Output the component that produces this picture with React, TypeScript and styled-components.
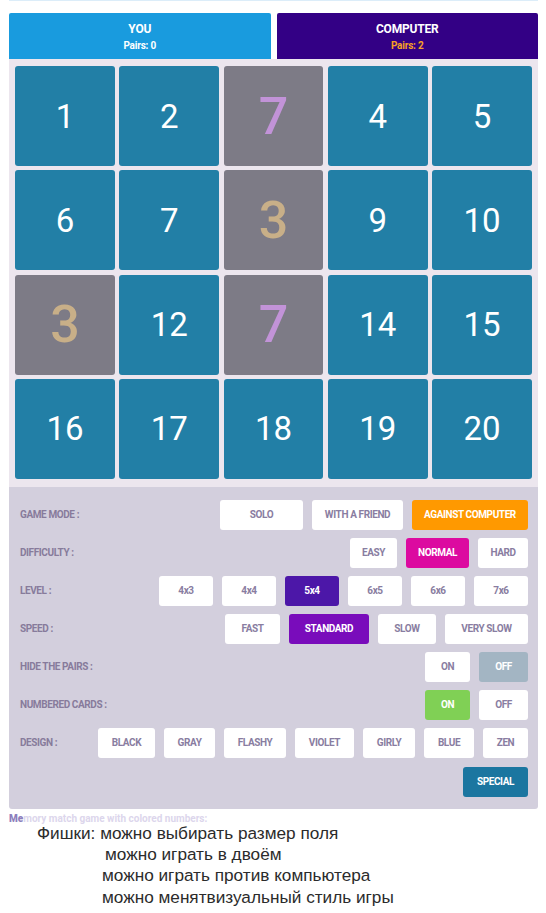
import { FC } from "react";
import styled, { createGlobalStyle } from "styled-components";

const GlobalStyle = createGlobalStyle`
  body {
    margin: 0;
    background: #ffffff;
    font-family: Roboto, "Noto Sans", sans-serif;
  }
`;

interface Option {
  label: string;
  width: number;
  active?: string;
}

interface SettingRow {
  label: string;
  options: Option[];
}

const cards: { value: number; revealed?: string }[] = [
  { value: 1 },
  { value: 2 },
  { value: 7, revealed: "#c293d8" },
  { value: 4 },
  { value: 5 },
  { value: 6 },
  { value: 7 },
  { value: 3, revealed: "#c8af88" },
  { value: 9 },
  { value: 10 },
  { value: 3, revealed: "#c8af88" },
  { value: 12 },
  { value: 7, revealed: "#c293d8" },
  { value: 14 },
  { value: 15 },
  { value: 16 },
  { value: 17 },
  { value: 18 },
  { value: 19 },
  { value: 20 },
];

const settings: SettingRow[] = [
  {
    label: "GAME MODE :",
    options: [
      { label: "SOLO", width: 83 },
      { label: "WITH A FRIEND", width: 91 },
      { label: "AGAINST COMPUTER", width: 116, active: "#ff9900" },
    ],
  },
  {
    label: "DIFFICULTY :",
    options: [
      { label: "EASY", width: 47 },
      { label: "NORMAL", width: 63, active: "#dc0aa0" },
      { label: "HARD", width: 50 },
    ],
  },
  {
    label: "LEVEL :",
    options: [
      { label: "4x3", width: 54 },
      { label: "4x4", width: 54 },
      { label: "5x4", width: 54, active: "#4c17a8" },
      { label: "6x5", width: 54 },
      { label: "6x6", width: 54 },
      { label: "7x6", width: 54 },
    ],
  },
  {
    label: "SPEED :",
    options: [
      { label: "FAST", width: 55 },
      { label: "STANDARD", width: 80, active: "#790cbb" },
      { label: "SLOW", width: 58 },
      { label: "VERY SLOW", width: 83 },
    ],
  },
  {
    label: "HIDE THE PAIRS :",
    options: [
      { label: "ON", width: 45 },
      { label: "OFF", width: 49, active: "#a3b5c3" },
    ],
  },
  {
    label: "NUMBERED CARDS :",
    options: [
      { label: "ON", width: 45, active: "#80d055" },
      { label: "OFF", width: 49 },
    ],
  },
  {
    label: "DESIGN :",
    options: [
      { label: "BLACK", width: 57 },
      { label: "GRAY", width: 51 },
      { label: "FLASHY", width: 62 },
      { label: "VIOLET", width: 59 },
      { label: "GIRLY", width: 52 },
      { label: "BLUE", width: 50 },
      { label: "ZEN", width: 45 },
      { label: "SPECIAL", width: 65, active: "#1b76a0" },
    ],
  },
];

const notes = [
  { text: "Фишки: можно выбирать размер поля", indent: 37 },
  { text: "можно играть в двоём", indent: 105 },
  { text: "можно играть против компьютера", indent: 102 },
  { text: "можно менятвизуальный стиль игры", indent: 102 },
];

const Page = styled.div`
  width: 529px;
  padding-left: 9px;
`;

const TopLine = styled.div`
  height: 1px;
  background: #dcedf9;
  margin-bottom: 12px;
`;

const Scoreboard = styled.div`
  display: flex;
  gap: 6px;
`;

const PlayerTab = styled.div<{ $bg: string; $pairs: string }>`
  flex: 1;
  height: 46px;
  display: flex;
  flex-direction: column;
  align-items: center;
  justify-content: center;
  gap: 4px;
  padding-top: 1px;
  box-sizing: border-box;
  background: ${(p) => p.$bg};
  border-radius: 2px 2px 0 0;
  color: #ffffff;
  font-weight: 700;

  span {
    color: ${(p) => p.$pairs};
    font-size: 10px;
    line-height: 11px;
    letter-spacing: -0.2px;
  }
`;

const PlayerName = styled.div`
  font-size: 12px;
  line-height: 13px;
  letter-spacing: -0.2px;
`;

const Board = styled.div`
  display: grid;
  grid-template-columns: repeat(5, 1fr);
  gap: 4.3px;
  padding: 7px 6px 8px;
  background: #ece6ee;
`;

const Card = styled.div<{ $revealed?: string }>`
  height: 100px;
  display: flex;
  align-items: center;
  justify-content: center;
  border-radius: 3px;
  background: ${(p) => (p.$revealed ? "#7d7b86" : "#227fa6")};
  color: ${(p) => p.$revealed ?? "#ffffff"};
  font-size: ${(p) => (p.$revealed ? "52px" : "33px")};
  font-weight: ${(p) => (p.$revealed ? 500 : 400)};
`;

const Panel = styled.div`
  display: flex;
  flex-direction: column;
  gap: 8px;
  padding: 13px 10px 12px 11px;
  background: #d3cfdd;
  border-radius: 0 0 3px 3px;
`;

const Row = styled.div`
  display: flex;
  align-items: flex-start;
  justify-content: space-between;
`;

const Label = styled.div`
  height: 30px;
  line-height: 30px;
  font-size: 10px;
  font-weight: 700;
  color: #877b9b;
  letter-spacing: -0.4px;
  white-space: nowrap;
`;

const Options = styled.div`
  display: flex;
  flex-wrap: wrap;
  justify-content: flex-end;
  gap: 9px 9px;
  max-width: 440px;
`;

const OptionButton = styled.div<{ $w: number; $active?: string }>`
  width: ${(p) => p.$w}px;
  height: 30px;
  display: flex;
  align-items: center;
  justify-content: center;
  border-radius: 3px;
  background: ${(p) => p.$active ?? "#ffffff"};
  color: ${(p) => (p.$active ? "#ffffff" : "#897da1")};
  font-size: 10px;
  font-weight: 700;
  letter-spacing: -0.4px;
  white-space: nowrap;
`;

const Caption = styled.div`
  margin-top: 5px;
  font-size: 10px;
  line-height: 9px;
  font-weight: 700;
  color: #dcd6ec;

  b {
    color: #8d7fbd;
  }
`;

const Notes = styled.div`
  font-family: "Liberation Sans", Arial, sans-serif;
  font-size: 17.2px;
  line-height: 21.3px;
  color: #2b2b2b;
`;

const NoteLine = styled.div<{ $indent: number }>`
  padding-left: ${(p) => p.$indent - 9}px;
`;

const SettingsRow: FC<{ row: SettingRow }> = ({ row }) => (
  <Row>
    <Label>{row.label}</Label>
    <Options>
      {row.options.map((o) => (
        <OptionButton key={o.label} $w={o.width} $active={o.active}>
          {o.label}
        </OptionButton>
      ))}
    </Options>
  </Row>
);

const App: FC = () => {
  return (
    <Page>
      <GlobalStyle />
      <TopLine />
      <Scoreboard>
        <PlayerTab $bg="#199bde" $pairs="#ffffff">
          <PlayerName>YOU</PlayerName>
          <span>Pairs: 0</span>
        </PlayerTab>
        <PlayerTab $bg="#330085" $pairs="#f7a024">
          <PlayerName>COMPUTER</PlayerName>
          <span>Pairs: 2</span>
        </PlayerTab>
      </Scoreboard>
      <Board>
        {cards.map((c, i) => (
          <Card key={i} $revealed={c.revealed}>
            {c.value}
          </Card>
        ))}
      </Board>
      <Panel>
        {settings.map((row) => (
          <SettingsRow key={row.label} row={row} />
        ))}
      </Panel>
      <Caption>
        <b>Me</b>mory match game with colored numbers:
      </Caption>
      <Notes>
        {notes.map((n) => (
          <NoteLine key={n.text} $indent={n.indent}>
            {n.text}
          </NoteLine>
        ))}
      </Notes>
    </Page>
  );
};

export default App;
